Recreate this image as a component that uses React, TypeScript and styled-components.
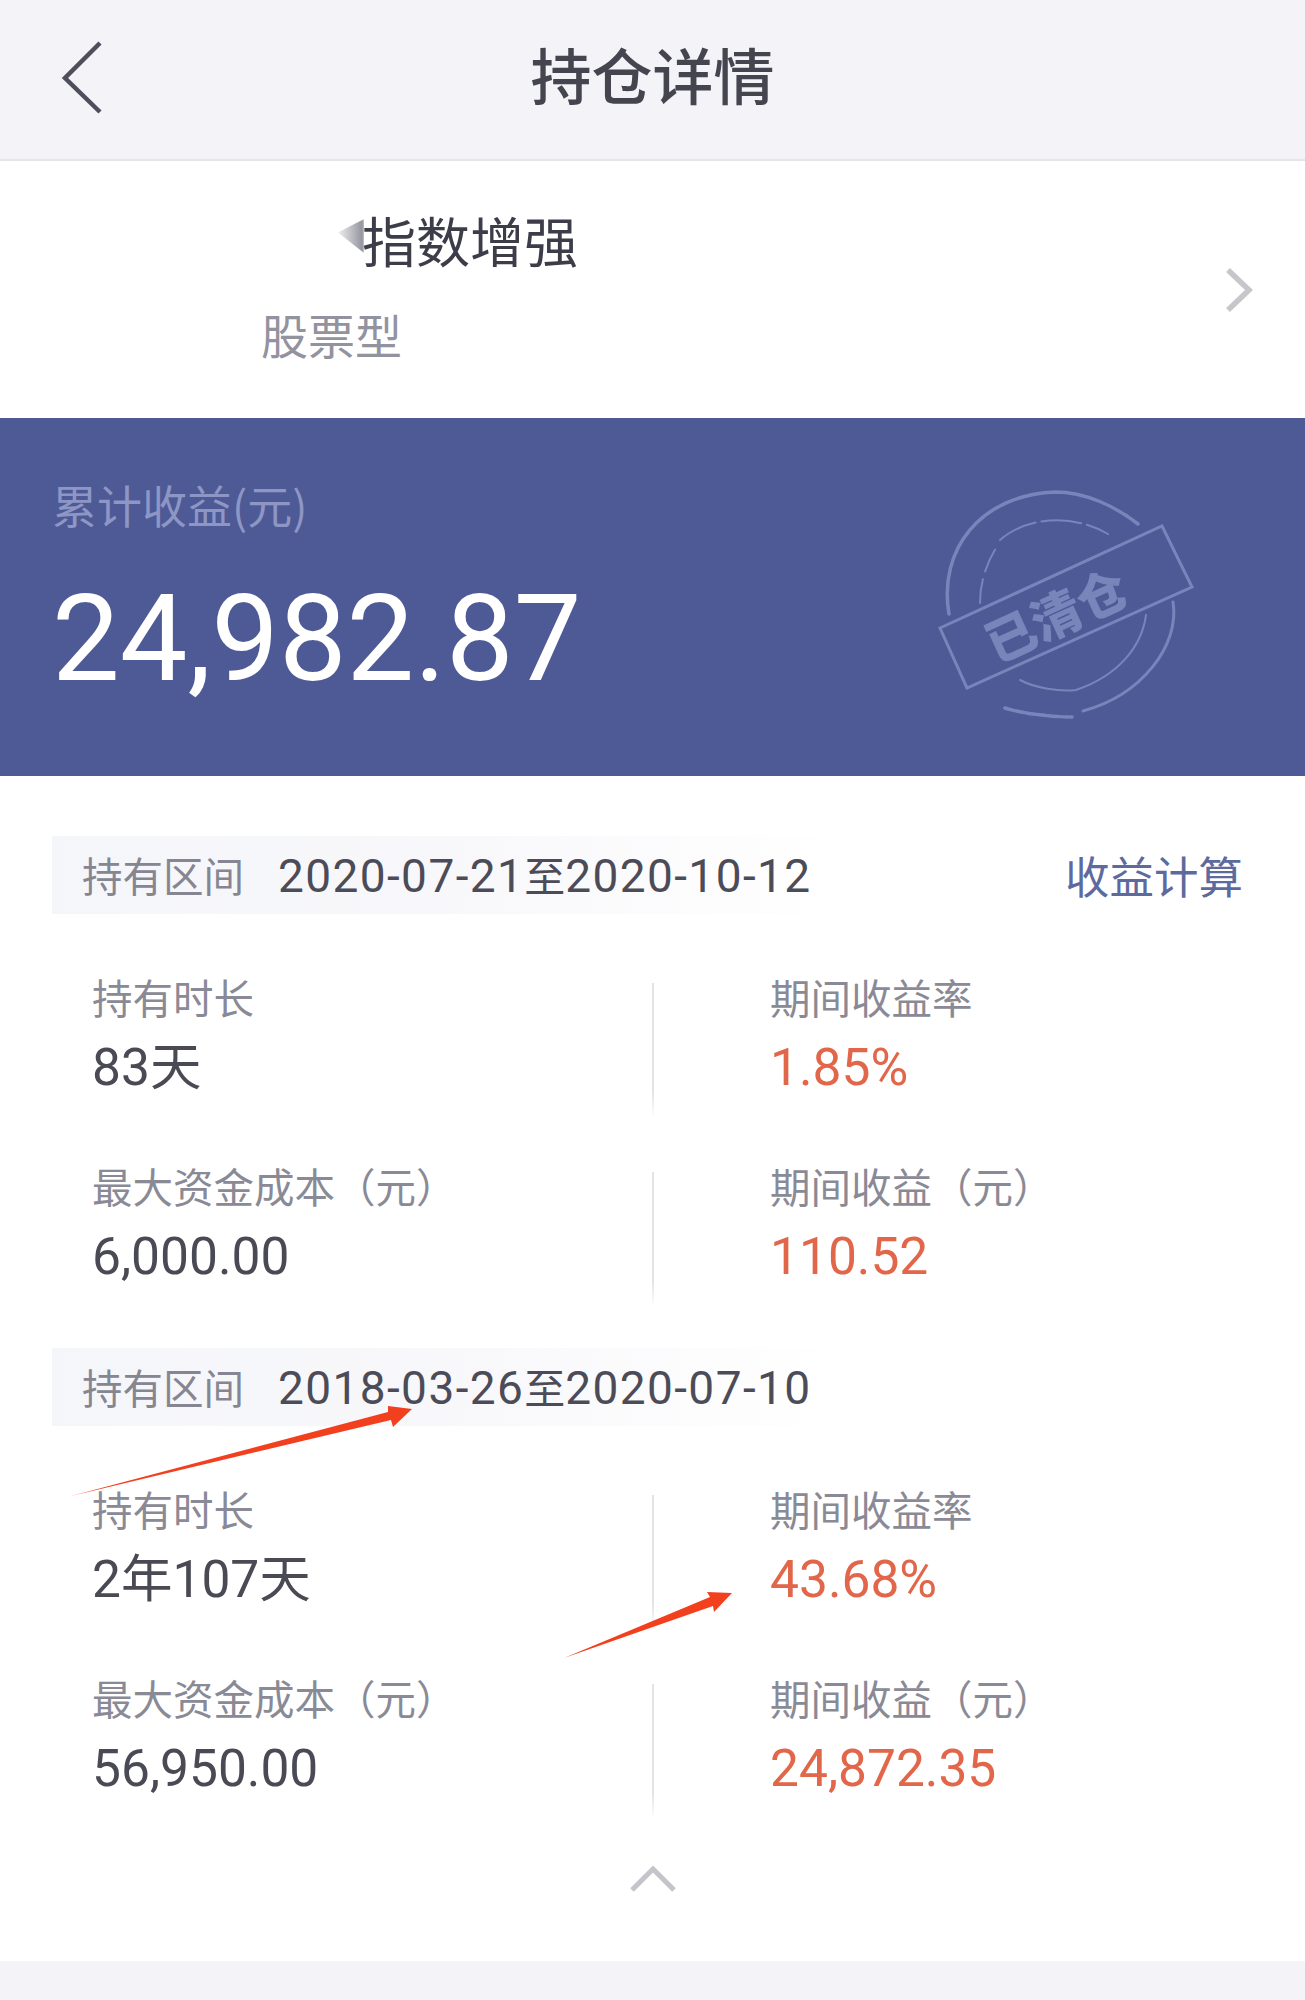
import React from "react";
import styled, { createGlobalStyle } from "styled-components";

const Global = createGlobalStyle`
  html, body { margin: 0; padding: 0; background: #fff; }
  body { font-family: "Noto Sans CJK SC", "Liberation Sans", sans-serif; }
`;

const Page = styled.div`
  position: relative;
  width: 1305px;
  height: 2000px;
  overflow: hidden;
  background: #fff;
  display: flex;
  flex-direction: column;
  font-family: "Roboto", "Noto Sans CJK SC", sans-serif;
`;

const Header = styled.header`
  position: relative;
  flex: none;
  height: 159px;
  border-bottom: 2px solid #e6e6ea;
  background: #f3f3f8;
  display: flex;
  align-items: center;
  justify-content: center;
`;

const BackIcon = styled.svg`
  position: absolute;
  left: 60px;
  top: 40px;
`;

const Title = styled.h1`
  margin: 0 0 12px;
  font-size: 61px;
  line-height: 1;
  font-weight: 500;
  color: #45454f;
  font-family: "Noto Sans CJK SC", sans-serif;
`;

const FundCard = styled.section`
  flex: none;
  height: 257px;
  box-sizing: border-box;
  padding-top: 48px;
  background: #fff;
  display: flex;
  align-items: flex-start;
  justify-content: space-between;
`;

const FundText = styled.div`
  display: flex;
  flex-direction: column;
`;

const FundName = styled.div`
  display: flex;
  align-items: center;
  margin-left: 342px;
  height: 62px;
  font-size: 54px;
  line-height: 62px;
  color: #3d3d4a;
  font-family: "Noto Sans CJK SC", sans-serif;
`;

const Smudge = styled.span`
  width: 26px;
  height: 34px;
  margin-left: -4px;
  margin-right: -2px;
  margin-top: -8px;
  background: linear-gradient(90deg, #eeeef1, #8f8f9a);
  clip-path: polygon(0 40%, 100% 0, 100% 100%);
  filter: blur(1px);
`;

const FundType = styled.div`
  margin: 35px 0 0 261px;
  font-size: 47px;
  line-height: 56px;
  color: #93939f;
  font-family: "Noto Sans CJK SC", sans-serif;
`;

const ForwardIcon = styled.svg`
  margin: 59px 52px 0 0;
  flex: none;
`;

const Banner = styled.section`
  position: relative;
  flex: none;
  height: 358px;
  box-sizing: border-box;
  padding: 57px 0 0 52px;
  background: #4e5a96;
`;

const BannerLabel = styled.div`
  font-size: 45px;
  line-height: 60px;
  color: #8d96c4;
  font-family: "Noto Sans CJK SC", sans-serif;
`;

const BannerValue = styled.div`
  margin-top: 39px;
  font-size: 120.5px;
  line-height: 130px;
  color: #fff;
  font-weight: 400;
`;

const Stamp = styled.svg`
  position: absolute;
  left: 880px;
  top: 22px;
  filter: blur(0.6px);
`;

const Details = styled.main`
  flex: none;
  padding-top: 60px;
  display: flex;
  flex-direction: column;
`;

const Section = styled.section`
  height: 512px;
  display: flex;
  flex-direction: column;
`;

const RangeRow = styled.div`
  height: 78px;
  display: flex;
  align-items: center;
  justify-content: space-between;
`;

const RangeBar = styled.div`
  width: 790px;
  height: 78px;
  margin-left: 52px;
  box-sizing: border-box;
  padding-left: 30px;
  display: flex;
  align-items: center;
  gap: 34px;
  background: linear-gradient(90deg, #f5f6fa 0%, #f8f8fb 50%, #fff 100%);
`;

const RangeLabel = styled.span`
  font-size: 40.5px;
  margin-top: -2px;
  color: #868692;
  font-family: "Noto Sans CJK SC", sans-serif;
`;

const RangeValue = styled.span`
  font-size: 46px;
  margin-top: -2px;
  color: #4c4c58;
  letter-spacing: 1.4px;
`;

const RangeJoin = styled.span`
  font-size: 41px;
  letter-spacing: 0;
  font-family: "Noto Sans CJK SC", sans-serif;
`;

const CalcLink = styled.a`
  margin-right: 62px;
  margin-top: -2px;
  font-size: 44.5px;
  color: #5d6a9e;
  font-family: "Noto Sans CJK SC", sans-serif;
`;

const Stats = styled.div`
  margin-top: 55px;
  display: grid;
  grid-template-columns: 652px 1fr;
  grid-auto-rows: 189px;
`;

const Stat = styled.div<{ $divided?: boolean }>`
  position: relative;
  box-sizing: border-box;
  padding-left: ${(p) => (p.$divided ? "118px" : "92px")};
  height: 137px;

  &::before {
    content: "";
    display: ${(p) => (p.$divided ? "block" : "none")};
    position: absolute;
    left: 0;
    top: 14px;
    width: 2px;
    height: 135px;
    background: linear-gradient(180deg, #e2e2e7 0%, #e2e2e7 80%, #fff 100%);
  }
`;

const StatLabel = styled.div`
  font-size: 40.5px;
  line-height: 56px;
  color: #8a8a96;
  font-family: "Noto Sans CJK SC", sans-serif;
`;

const StatValue = styled.div<{ $accent?: boolean }>`
  margin-top: 9px;
  font-size: 51.5px;
  line-height: 68px;
  color: ${(p) => (p.$accent ? "#e1664a" : "#4a4a55")};
`;

const Collapse = styled.div`
  flex: none;
  height: 101px;
  box-sizing: border-box;
  padding-top: 3px;
  display: flex;
  justify-content: center;
  align-items: flex-start;
`;

const Footer = styled.footer`
  flex: 1;
  background: #f3f3f8;
`;

const Arrow = styled.svg<{ $left: number; $top: number }>`
  position: absolute;
  left: ${(p) => p.$left}px;
  top: ${(p) => p.$top}px;
`;

type Item = { label: string; value: string; accent?: boolean; divided?: boolean };

const sections: { from: string; to: string; link?: string; items: Item[] }[] = [
  {
    from: "2020-07-21",
    to: "2020-10-12",
    link: "收益计算",
    items: [
      { label: "持有时长", value: "83天" },
      { label: "期间收益率", value: "1.85%", accent: true, divided: true },
      { label: "最大资金成本（元）", value: "6,000.00" },
      { label: "期间收益（元）", value: "110.52", accent: true, divided: true },
    ],
  },
  {
    from: "2018-03-26",
    to: "2020-07-10",
    items: [
      { label: "持有时长", value: "2年107天" },
      { label: "期间收益率", value: "43.68%", accent: true, divided: true },
      { label: "最大资金成本（元）", value: "56,950.00" },
      { label: "期间收益（元）", value: "24,872.35", accent: true, divided: true },
    ],
  },
];

export default function App() {
  return (
    <Page>
      <Global />
      <Header>
        <BackIcon width="44" height="76" viewBox="0 0 44 76" fill="none">
          <path d="M40 3 L5 38 L40 72" stroke="#4f4f5b" strokeWidth="4.5" />
        </BackIcon>
        <Title>持仓详情</Title>
      </Header>

      <FundCard>
        <FundText>
          <FundName>
            <Smudge />
            指数增强
          </FundName>
          <FundType>股票型</FundType>
        </FundText>
        <ForwardIcon width="28" height="44" viewBox="0 0 28 44" fill="none">
          <path d="M3 2 L24 22 L3 42" stroke="#c6c6cb" strokeWidth="5.5" />
        </ForwardIcon>
      </FundCard>

      <Banner>
        <BannerLabel>累计收益(元)</BannerLabel>
        <BannerValue>24,982.87</BannerValue>
        <Stamp width="340" height="300" viewBox="0 0 340 300" fill="none">
          <g stroke="#7785bb" strokeLinecap="round">
            <path d="M69 174 C58 110 100 55 175 52 C205 52 235 66 258 84" strokeWidth="3.5" />
            <path d="M293 162 C300 205 262 255 203 271" strokeWidth="3" />
            <path d="M125 268 C140 273 170 277 192 277" strokeWidth="3.5" strokeDasharray="9 2" />
            <path d="M100 163 C100 140 108 120 118 105" strokeWidth="2" strokeDasharray="24 8" />
            <path d="M120 100 C145 78 190 72 228 94" strokeWidth="2" strokeDasharray="40 6" />
            <path d="M266 175 C262 205 240 235 196 250 C180 252 155 248 140 240" strokeWidth="2" />
            <path d="M60 188 L282 86 L312 147 L87 248 Z" strokeWidth="3" />
          </g>
          <text
            x="177"
            y="194"
            textAnchor="middle"
            fontSize="50"
            fontWeight="900"
            fill="#7785bb"
            fontFamily="'Noto Sans CJK SC', sans-serif"
            transform="rotate(-24.6 177 177)"
          >
            已清仓
          </text>
        </Stamp>
      </Banner>

      <Details>
        {sections.map((s) => (
          <Section key={s.from}>
            <RangeRow>
              <RangeBar>
                <RangeLabel>持有区间</RangeLabel>
                <RangeValue>
                  {s.from}
                  <RangeJoin>至</RangeJoin>
                  {s.to}
                </RangeValue>
              </RangeBar>
              {s.link && <CalcLink>{s.link}</CalcLink>}
            </RangeRow>
            <Stats>
              {s.items.map((it) => (
                <Stat key={it.label} $divided={it.divided}>
                  <StatLabel>{it.label}</StatLabel>
                  <StatValue $accent={it.accent}>{it.value}</StatValue>
                </Stat>
              ))}
            </Stats>
          </Section>
        ))}
      </Details>

      <Collapse>
        <svg width="48" height="32" viewBox="0 0 48 32" fill="none">
          <path d="M3 27 L24 6 L45 27" stroke="#c4c4ca" strokeWidth="5" />
        </svg>
      </Collapse>
      <Footer />

      <Arrow $left={60} $top={1396} width="360" height="110" viewBox="0 0 360 110">
        <path d="M11 100 L328 16 L328 10 L352 13 L333 31 L331 24 Z" fill="#f2401f" />
      </Arrow>
      <Arrow $left={555} $top={1585} width="185" height="80" viewBox="0 0 185 80">
        <path d="M9 73 L155 12 L152 7 L177 8 L159 27 L158 21 Z" fill="#f2401f" />
      </Arrow>
    </Page>
  );
}
